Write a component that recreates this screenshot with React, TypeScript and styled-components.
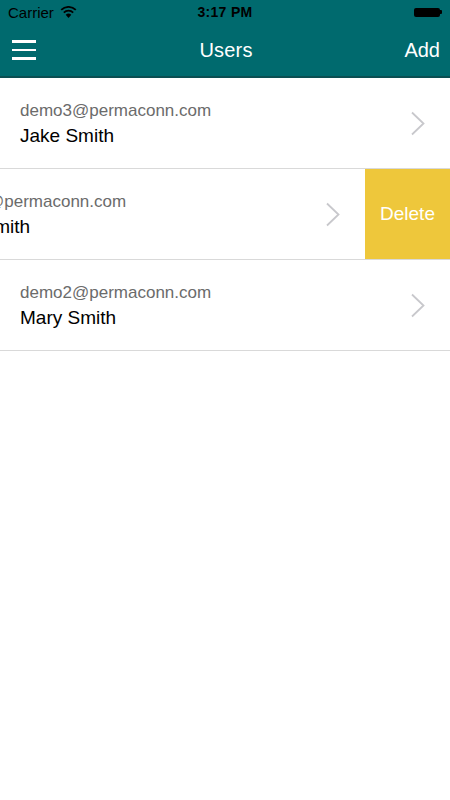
import * as React from 'react';
import styled, { createGlobalStyle } from 'styled-components';

const GlobalStyle = createGlobalStyle`
  html, body {
    margin: 0;
    padding: 0;
    background: #fff;
    font-family: "Liberation Sans", Arial, sans-serif;
  }
`;

const Screen = styled.div`
  width: 450px;
  height: 800px;
  background: #fff;
  overflow: hidden;
`;

const Header = styled.div`
  background-color: #006a6e;
  border-bottom: 2px solid #0b4f52;
`;

const StatusBar = styled.div`
  height: 24px;
  display: grid;
  grid-template-columns: 1fr auto 1fr;
  align-items: center;
  padding: 0 8px;
  color: #000;
  font-size: 15px;
`;

const Carrier = styled.div`
  display: flex;
  align-items: center;
  gap: 6px;
`;

const Time = styled.div`
  font-weight: bold;
  font-size: 14px;
  letter-spacing: 0.3px;
`;

const Battery = styled.div`
  justify-self: end;
  display: flex;
  align-items: center;
`;

const BatteryBody = styled.div`
  width: 26px;
  height: 9px;
  background: #000;
  border-radius: 2px;
`;

const BatteryTip = styled.div`
  width: 2px;
  height: 4px;
  background: #000;
  border-radius: 0 1px 1px 0;
`;

const NavBar = styled.div`
  height: 52px;
  display: grid;
  grid-template-columns: 1fr auto 1fr;
  align-items: center;
  padding: 0 10px 0 12px;
  color: #fff;
`;

const Hamburger = styled.div`
  display: flex;
  flex-direction: column;
  gap: 6px;
  width: 24px;
  span {
    display: block;
    height: 2.5px;
    background: #fff;
  }
`;

const Title = styled.div`
  font-size: 20px;
  letter-spacing: 0.2px;
`;

const AddButton = styled.div`
  justify-self: end;
  font-size: 20px;
`;

const List = styled.div`
  display: flex;
  flex-direction: column;
`;

const Row = styled.div`
  display: flex;
  height: 90px;
  border-bottom: 1px solid #d9d9d9;
  overflow: hidden;
`;

const RowContent = styled.div<{ $shift: number }>`
  flex: 0 0 450px;
  margin-left: ${p => -p.$shift}px;
  display: flex;
  align-items: center;
  padding: 0 24px 0 20px;
  box-sizing: border-box;
`;

const Texts = styled.div`
  flex: 1;
  display: flex;
  flex-direction: column;
  gap: 4px;
  margin-top: 2px;
`;

const Email = styled.div`
  color: #6b6b6b;
  font-size: 17px;
`;

const Name = styled.div`
  color: #000;
  font-size: 19px;
`;

const DeleteButton = styled.div`
  flex: 0 0 85px;
  background: #eec73b;
  color: #fff;
  font-size: 19px;
  display: flex;
  align-items: center;
  justify-content: center;
`;

const Chevron = () => (
  <svg width="16" height="25" viewBox="0 0 16 25">
    <path d="M2 1.5 L13.5 12.5 L2 23.5" fill="none" stroke="#c8c8cc" strokeWidth="1.8" />
  </svg>
);

const Wifi = () => (
  <svg width="17" height="12" viewBox="0 0 17 12">
    <path d="M8.5 12 L5.7 8.8 A4 4 0 0 1 11.3 8.8 Z" fill="#000" />
    <path d="M3.8 6.6 A6.8 6.8 0 0 1 13.2 6.6" fill="none" stroke="#000" strokeWidth="1.8" />
    <path d="M1.2 3.8 A10.6 10.6 0 0 1 15.8 3.8" fill="none" stroke="#000" strokeWidth="1.8" />
  </svg>
);

const users = [
  { email: 'demo3@permaconn.com', name: 'Jake Smith', swiped: false },
  { email: 'demo1@permaconn.com', name: 'John Smith', swiped: true },
  { email: 'demo2@permaconn.com', name: 'Mary Smith', swiped: false },
];

const App = () => {
  return (
    <Screen>
      <GlobalStyle />
      <Header>
        <StatusBar>
          <Carrier>
            Carrier
            <Wifi />
          </Carrier>
          <Time>3:17 PM</Time>
          <Battery>
            <BatteryBody />
            <BatteryTip />
          </Battery>
        </StatusBar>
        <NavBar>
          <Hamburger>
            <span />
            <span />
            <span />
          </Hamburger>
          <Title>Users</Title>
          <AddButton>Add</AddButton>
        </NavBar>
      </Header>
      <List>
        {users.map((user, index) => (
          <Row key={`user-${index + 1}`}>
            <RowContent $shift={user.swiped ? 85 : 0}>
              <Texts>
                <Email>{user.email}</Email>
                <Name>{user.name}</Name>
              </Texts>
              <Chevron />
            </RowContent>
            {user.swiped && <DeleteButton>Delete</DeleteButton>}
          </Row>
        ))}
      </List>
    </Screen>
  );
};

export default App;
